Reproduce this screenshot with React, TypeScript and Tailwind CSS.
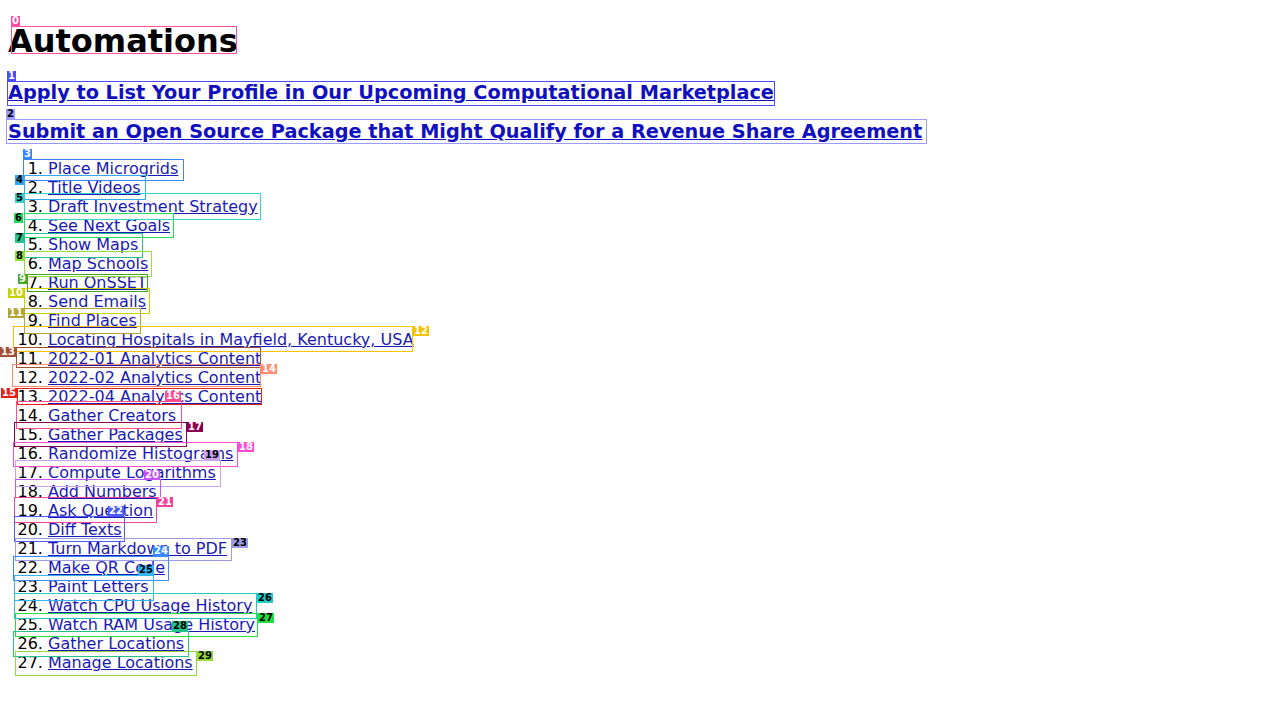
import React from "react";

const headings = [
  "Apply to List Your Profile in Our Upcoming Computational Marketplace",
  "Submit an Open Source Package that Might Qualify for a Revenue Share Agreement",
];

const automations = [
  "Place Microgrids",
  "Title Videos",
  "Draft Investment Strategy",
  "See Next Goals",
  "Show Maps",
  "Map Schools",
  "Run OnSSET",
  "Send Emails",
  "Find Places",
  "Locating Hospitals in Mayfield, Kentucky, USA",
  "2022-01 Analytics Content",
  "2022-02 Analytics Content",
  "2022-04 Analytics Content",
  "Gather Creators",
  "Gather Packages",
  "Randomize Histograms",
  "Compute Logarithms",
  "Add Numbers",
  "Ask Question",
  "Diff Texts",
  "Turn Markdown to PDF",
  "Make QR Code",
  "Paint Letters",
  "Watch CPU Usage History",
  "Watch RAM Usage History",
  "Gather Locations",
  "Manage Locations",
];

// [x1, y1, x2, y2, colour, labelX, labelY, dark label text]
type Mark = [number, number, number, number, string, number, number, boolean];

const marks: Mark[] = [
  [11, 26, 237, 54, "#ff4fa0", 11, 16, false],
  [7, 81, 775, 106, "#4a4aff", 7, 71, false],
  [6, 119, 927, 144, "#9b9bff", 6, 109, true],
  [23, 159, 184, 181, "#3a86ff", 23, 149, false],
  [24, 175, 146, 200, "#34a8ee", 15, 175, true],
  [24, 193, 261, 220, "#34d0cc", 15, 193, true],
  [24, 213, 174, 238, "#22e05a", 14, 213, true],
  [24, 233, 143, 258, "#22c48e", 15, 233, true],
  [24, 251, 152, 277, "#92e03a", 15, 251, true],
  [27, 274, 148, 292, "#46a624", 18, 274, false],
  [24, 288, 150, 314, "#c8d200", 8, 288, false],
  [24, 308, 141, 334, "#b4a436", 8, 308, false],
  [13, 326, 413, 352, "#f8c200", 413, 326, false],
  [16, 347, 261, 368, "#a34f34", 0, 347, false],
  [12, 364, 261, 387, "#ff8c70", 261, 364, false],
  [17, 388, 262, 405, "#e62012", 1, 388, false],
  [16, 401, 182, 429, "#ff4c8c", 165, 391, false],
  [14, 422, 187, 447, "#8c0052", 187, 422, false],
  [13, 442, 238, 467, "#ff4ad6", 238, 442, false],
  [15, 460, 221, 487, "#c8a2f0", 204, 450, true],
  [15, 479, 161, 498, "#c452ff", 144, 470, false],
  [14, 497, 157, 523, "#f0449c", 157, 497, false],
  [14, 516, 125, 542, "#4a5aff", 108, 506, false],
  [15, 538, 232, 561, "#9c9ce8", 232, 538, true],
  [13, 556, 169, 581, "#3a8aff", 153, 546, false],
  [14, 575, 154, 601, "#34b4f0", 138, 565, true],
  [14, 593, 257, 619, "#22cac6", 257, 593, true],
  [15, 613, 258, 637, "#22e040", 258, 613, true],
  [13, 631, 189, 657, "#22c48a", 172, 621, true],
  [15, 651, 197, 676, "#94d83c", 197, 651, true],
];

const Marks = () => (
  <div className="pointer-events-none absolute inset-0">
    {marks.map(([x1, y1, x2, y2, color, lx, ly, dark], i) => (
      <React.Fragment key={i}>
        <div
          className="absolute border"
          style={{ left: x1, top: y1, width: x2 - x1, height: y2 - y1, borderColor: color }}
        />
        <div
          className={`absolute h-[10px] text-center text-[10px] font-bold leading-[10px] ${dark ? "text-black" : "text-white"}`}
          style={{ left: lx, top: ly, width: i < 10 ? 9 : 16, backgroundColor: color }}
        >
          {i}
        </div>
      </React.Fragment>
    ))}
  </div>
);

export default function App() {
  return (
    <div className="relative min-h-[720px] bg-white px-2 pt-px font-['DejaVu_Sans',sans-serif] text-black">
      <h1 className="mt-[21px] mb-[21px] text-[32px] leading-[38px] font-bold">Automations</h1>

      {headings.map((h) => (
        <p key={h} className="my-4 text-[19.3px] leading-[23px] font-bold">
          <a href="#" className="text-[#1010c0] underline">
            {h}
          </a>
        </p>
      ))}

      <ol className="my-4 list-decimal pl-10 text-[16px] leading-[19px]">
        {automations.map((a) => (
          <li key={a}>
            <a href="#" className="text-[#1a1ab4] underline">
              {a}
            </a>
          </li>
        ))}
      </ol>

      <Marks />
    </div>
  );
}
